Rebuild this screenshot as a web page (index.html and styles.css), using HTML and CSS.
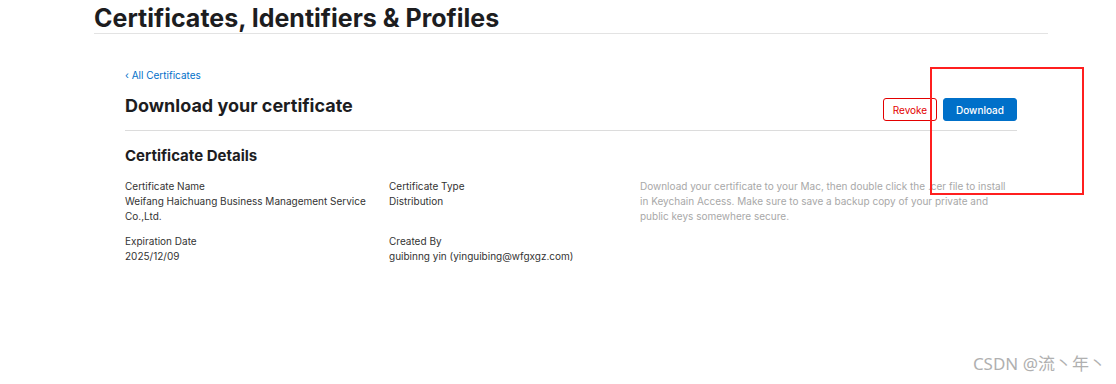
FILE: index.html
```html
<!DOCTYPE html>
<html lang="en">
	<head>
		<meta charset="UTF-8" />
		<meta name="viewport" content="width=device-width, initial-scale=1.0" />
		<title>Certificates, Identifiers &amp; Profiles</title>
		<link rel="stylesheet" href="styles.css">
	</head>
	<body>
		<div class="page">
			<h1 class="page-title">Certificates, Identifiers &amp; Profiles</h1>
			<div class="content">
				<a class="back-link" href="#">&lsaquo; All Certificates</a>
				<div class="title-row">
					<h2>Download your certificate</h2>
					<div class="actions">
						<button class="btn btn-revoke">Revoke</button>
						<button class="btn btn-download">Download</button>
					</div>
				</div>
				<h3>Certificate Details</h3>
				<div class="details">
					<div class="col">
						<div class="field">
							<span class="label">Certificate Name</span>
							<span class="value">Weifang Haichuang Business Management Service Co.,Ltd.</span>
						</div>
						<div class="field">
							<span class="label">Expiration Date</span>
							<span class="value">2025/12/09</span>
						</div>
					</div>
					<div class="col">
						<div class="field">
							<span class="label">Certificate Type</span>
							<span class="value">Distribution</span>
						</div>
						<div class="field field-low">
							<span class="label">Created By</span>
							<span class="value">guibinng yin (yinguibing@wfgxgz.com)</span>
						</div>
					</div>
					<p class="note">Download your certificate to your Mac, then double click the .cer file to install in Keychain Access. Make sure to save a backup copy of your private and public keys somewhere secure.</p>
				</div>
			</div>
		</div>
		<div class="highlight"></div>
		<div class="watermark">CSDN @流丶年丶</div>
	</body>
</html>
```

FILE: styles.css
```css
body {
	margin: 0;
	font-family: 'Inter', 'Liberation Sans', sans-serif;
	color: #1d1d1f;
	background: #ffffff;
	height: 384px;
	overflow: hidden;
}
.page {
	width: 954px;
	margin-left: 94px;
}
.page-title {
	margin: 0;
	padding-top: 4px;
	font-size: 25px;
	line-height: 28px;
	font-weight: 700;
	letter-spacing: 0;
	border-bottom: 1px solid #e3e3e3;
	padding-bottom: 1px;
}
.content {
	width: 892px;
	margin-left: 31px;
	padding-top: 35px;
}
.back-link {
	display: block;
	font-size: 10px;
	line-height: 12px;
	color: #0070c9;
	text-decoration: none;
}
.title-row {
	display: flex;
	justify-content: space-between;
	align-items: flex-start;
	margin-top: 14px;
	padding-bottom: 9px;
	border-bottom: 1px solid #dcdcdc;
}
.title-row h2 {
	margin: 0;
	font-size: 18px;
	line-height: 22px;
	font-weight: 700;
}
.actions {
	display: flex;
	gap: 6px;
	margin-top: 3px;
}
.btn {
	font-family: inherit;
	font-size: 10px;
	height: 23px;
	border-radius: 3px;
	padding: 0 10px;
	background: #ffffff;
	cursor: pointer;
}
.btn-revoke {
	width: 54px;
	padding: 0;
	color: #e30000;
	border: 1px solid #e30000;
}
.btn-download {
	width: 74px;
	padding: 0;
	color: #ffffff;
	background: #0070c9;
	border: 1px solid #0070c9;
	font-weight: 500;
}
h3 {
	margin: 15px 0 0;
	font-size: 15px;
	line-height: 20px;
	font-weight: 700;
}
.details {
	display: flex;
	margin-top: 13px;
	font-size: 10px;
	line-height: 15px;
}
.col {
	display: flex;
	flex-direction: column;
	gap: 10px;
}
.col:first-child {
	width: 264px;
}
.col:nth-child(2) {
	width: 251px;
}
.field span {
	display: block;
}
.field .label {
	color: #333333;
}
.field .value {
	color: #333333;
}
.col:first-child .value {
	width: 245px;
}
.field-low {
	margin-top: 15px;
}
.note {
	margin: 0;
	width: 372px;
	color: #a8a8a8;
}
.highlight {
	position: absolute;
	left: 930px;
	top: 67px;
	width: 150px;
	height: 124px;
	border: 2px solid #ff1f1f;
}
.watermark {
	position: absolute;
	right: 10px;
	top: 352px;
	font-size: 17px;
	line-height: 24px;
	color: #b0b0b0;
	font-family: 'Noto Sans', 'Noto Sans CJK SC', sans-serif;
}
```
